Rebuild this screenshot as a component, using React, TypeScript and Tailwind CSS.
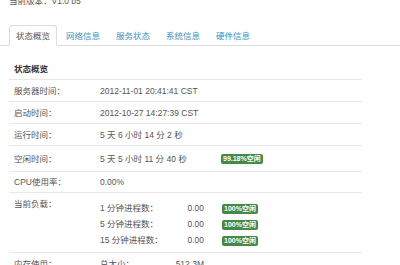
import React from 'react';

const tabs = ['状态概览', '网络信息', '服务状态', '系统信息', '硬件信息'];

const Badge: React.FC<{ text: string }> = ({ text }) => (
    <span className="inline-block h-[10px] px-[2px] rounded-[2px] bg-[#468847] text-white text-[7px] font-bold leading-[10px]">
        {text}
    </span>
);

const loads = [
    { label: '1 分钟进程数：', value: '0.00' },
    { label: '5 分钟进程数：', value: '0.00' },
    { label: '15 分钟进程数：', value: '0.00' },
];

export default function App() {
    return (
        <div
            className="w-[400px] h-[265px] overflow-hidden bg-white text-[8.5px] text-[#555] leading-[12px]"
            style={{ fontFamily: '"Liberation Sans", "Noto Sans CJK SC", sans-serif' }}
        >
            {/* Version */}
            <div className="pl-[9px] -mt-[5px] h-[12px]">当前版本：V1.0 b5</div>

            {/* Tabs */}
            <ul className="mt-[18px] flex pl-[9px] border-b border-[#ddd]">
                {tabs.map((t, i) => (
                    <li
                        key={t}
                        className={
                            i === 0
                                ? 'h-[21px] -mb-px mr-[2px] px-[6px] flex items-center bg-white border border-[#ddd] border-b-white rounded-t-[3px] text-[#555]'
                                : 'h-[21px] -mb-px mr-[2px] px-[6px] flex items-center border border-transparent text-[#3d94bf]'
                        }
                    >
                        {t}
                    </li>
                ))}
            </ul>

            {/* Status table */}
            <div className="ml-[9px] w-[353px] mt-[12px]">
                <div className="h-[22px] flex items-center pl-[5px] border-b border-[#e8e8e8] font-bold text-[#333]">
                    状态概览
                </div>

                <div className="h-[22px] flex items-center border-b border-[#e8e8e8]">
                    <div className="w-[91px] pl-[5px]">服务器时间：</div>
                    <div>2012-11-01 20:41:41 CST</div>
                </div>
                <div className="h-[22px] flex items-center border-b border-[#e8e8e8]">
                    <div className="w-[91px] pl-[5px]">启动时间：</div>
                    <div>2012-10-27 14:27:39 CST</div>
                </div>
                <div className="h-[22px] flex items-center border-b border-[#e8e8e8]">
                    <div className="w-[91px] pl-[5px]">运行时间：</div>
                    <div>5 天 6 小时 14 分 2 秒</div>
                </div>
                <div className="h-[26px] flex items-center border-b border-[#e8e8e8]">
                    <div className="w-[91px] pl-[5px]">空闲时间：</div>
                    <div className="w-[121px]">5 天 5 小时 11 分 40 秒</div>
                    <Badge text="99.18%空闲" />
                </div>
                <div className="h-[21px] flex items-center border-b border-[#e8e8e8]">
                    <div className="w-[91px] pl-[5px]">CPU使用率：</div>
                    <div>0.00%</div>
                </div>

                <div className="h-[60px] flex items-start border-b border-[#e8e8e8]">
                    <div className="w-[91px] pl-[5px] pt-[5px]">当前负载：</div>
                    <div className="pt-[7px]">
                        {loads.map((l) => (
                            <div key={l.label} className="h-[16px] flex items-center">
                                <div className="w-[70px]">{l.label}</div>
                                <div className="w-[34px] text-right">{l.value}</div>
                                <div className="pl-[18px]">
                                    <Badge text="100%空闲" />
                                </div>
                            </div>
                        ))}
                    </div>
                </div>

                <div className="h-[22px] flex items-center border-b border-[#e8e8e8]">
                    <div className="w-[91px] pl-[5px]">内存使用：</div>
                    <div className="w-[70px]">总大小：</div>
                    <div className="w-[34px] text-right">512.3M</div>
                </div>
            </div>
        </div>
    );
}
